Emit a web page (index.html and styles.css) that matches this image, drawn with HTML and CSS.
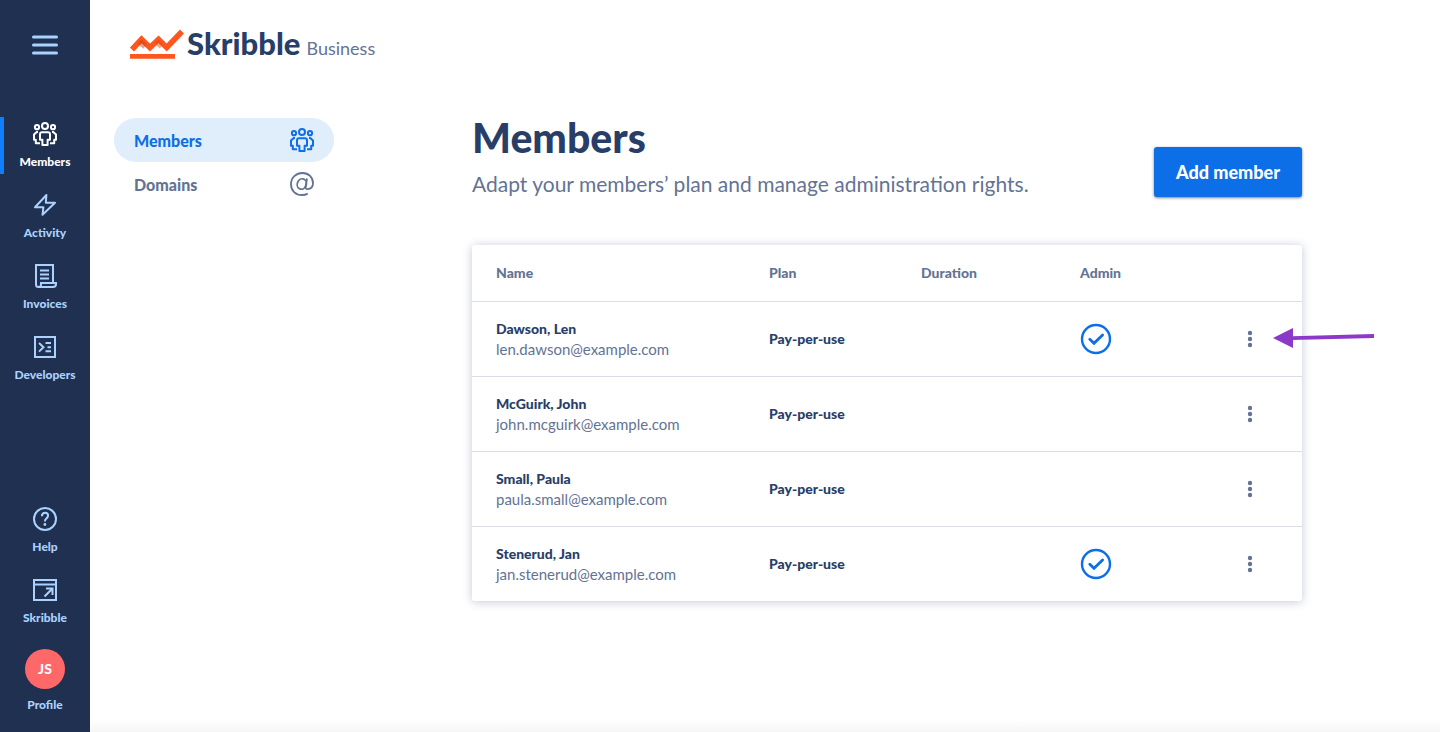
FILE: index.html
```html
<!DOCTYPE html>
<html lang="en">
<head>
<meta charset="utf-8">
<title>Skribble Business – Members</title>
<link rel="stylesheet" href="styles.css">
</head>
<body>
<svg class="sprite" aria-hidden="true">
  <symbol id="i-members" viewBox="0 0 24 24">
    <g fill="none" stroke="currentColor" stroke-width="2" stroke-linejoin="round">
      <circle cx="12" cy="4" r="3"/><circle cx="4" cy="5.2" r="2.100"/><circle cx="20" cy="5.200" r="2.100"/>
      <path d="M9 10.200h6q2 0 2 2v5.600h-2.400v5.200H9.400v-5.200H7v-5.600q0-2 2-2z"/>
      <path d="M5 10H3.800L1 12.600v5.200h1.800v3.400H7M19 10h1.200l2.800 2.600v5.200h-1.800v3.400H17"/>
    </g>
  </symbol>
  <symbol id="i-check" viewBox="0 0 32 32">
    <circle cx="16" cy="16" r="14" fill="none" stroke="currentColor" stroke-width="2.400"/>
    <path d="M9.800 16.200l4.200 4 8.600-8.200" fill="none" stroke="currentColor" stroke-width="2.800" stroke-linecap="round"/>
  </symbol>
  <symbol id="i-dots" viewBox="0 0 16 24">
    <circle cx="8" cy="6" r="2.200" fill="currentColor"/><circle cx="8" cy="12" r="2.200" fill="currentColor"/><circle cx="8" cy="18" r="2.200" fill="currentColor"/>
  </symbol>
</svg>
<div class="app">
  <nav class="sidebar" aria-label="Main">
    <button class="burger" type="button" aria-label="Menu"><svg viewBox="0 0 26 20" width="26" height="20"><path d="M1.500 2h23M1.500 10h23M1.500 18h23" stroke="currentColor" stroke-width="3" stroke-linecap="round"/></svg></button>
    <div class="side-group">
      <a class="side-item active" href="#members"><svg class="icon"><use href="#i-members"/></svg>Members</a>
      <a class="side-item" href="#activity"><svg class="icon" viewBox="0 0 24 24"><path d="M13.400 2L2 14.200h8.400l-.9 7.600L22 9.800h-9.200z" fill="none" stroke="currentColor" stroke-width="2" stroke-linejoin="round"/></svg>Activity</a>
      <a class="side-item" href="#invoices"><svg class="icon" viewBox="0 0 24 24"><path d="M20 18.500V1H3v19.500Q3 23 5.500 23H20q3 0 3-3v-1H8v1.500Q8 23 5.500 23M7 6.500h9M7 10.500h9M7 14.500h9" fill="none" stroke="currentColor" stroke-width="2"/></svg>Invoices</a>
      <a class="side-item" href="#developers"><svg class="icon" viewBox="0 0 24 24"><path d="M2 2h20v20H2z" fill="none" stroke="currentColor" stroke-width="2"/><path d="M6 8l4.500 4.300L6 16.600M12.500 8H18M14.500 12.300H18M12.500 16.300H18" fill="none" stroke="currentColor" stroke-width="2"/></svg>Developers</a>
    </div>
    <div class="side-group side-bottom">
      <a class="side-item" href="#help"><svg class="icon" viewBox="0 0 24 24"><circle cx="12" cy="12" r="11" fill="none" stroke="currentColor" stroke-width="2"/><path d="M8.900 9.300q0-3.600 3.200-3.600 3 0 3 2.900 0 1.500-1.600 2.800-1.600 1.200-1.600 3.200" fill="none" stroke="currentColor" stroke-width="2"/><circle cx="11.900" cy="17.500" r="1.400" fill="currentColor"/></svg>Help</a>
      <a class="side-item" href="#skribble"><svg class="icon" viewBox="0 0 24 24"><path d="M1 2h22v20H1zM1 6.500h22M11.500 18.500l7.500-7.500M13 10.500h6.500V17" fill="none" stroke="currentColor" stroke-width="2"/></svg>Skribble</a>
      <a class="side-item" href="#profile"><span class="avatar">JS</span>Profile</a>
    </div>
  </nav>
  <div class="page">
    <header class="brand">
      <svg class="brand-mark" viewBox="0 0 54 30" width="54" height="30" aria-hidden="true">
        <defs><linearGradient id="fold" x1="0" x2="1" y1="0" y2="1"><stop offset="0" stop-color="#b8380f"/><stop offset="1" stop-color="#ff561e"/></linearGradient></defs>
        <path d="M2 20.500L11.500 10.300l8.500 8.200 8.500-8.200 8.200 8.200L52 2.500" fill="none" stroke="#ff561e" stroke-width="5.600"/>
        <path d="M9.500 12.500l2-2.200 5.500 5.300-3.900 4.100-5.300-5.200zM26.300 12.400l2.200-2.100 5.100 5.100-4 4-5.100-5.200z" fill="url(#fold)" opacity=".5"/>
        <path d="M0 27.400h45" stroke="#ff561e" stroke-width="4.600"/>
      </svg>
      <span class="brand-name">Skribble</span>
      <span class="brand-plan">Business</span>
    </header>
    <div class="columns">
      <nav class="submenu" aria-label="Business">
        <a class="submenu-item current" href="#members">Members<svg class="icon"><use href="#i-members"/></svg></a>
        <a class="submenu-item" href="#domains">Domains<svg class="icon" viewBox="0 0 24 24"><g fill="none" stroke="currentColor" stroke-width="1.800"><ellipse cx="11.800" cy="12" rx="4.500" ry="5.300" transform="rotate(22 11.800 12)"/><path d="M17 6.500l-1.300 7.800q-.5 2.900 1.900 2.900 5.400-.6 5.400-6C23 5.300 18.600 1 12.500 1 6 1 1 5.700 1 12.200 1 18.700 5.500 23 12 23q3.200 0 5.700-1.400"/></g></svg></a>
      </nav>
      <main class="content">
        <div class="heading">
          <div>
            <h1>Members</h1>
            <p class="intro">Adapt your members’ plan and manage administration rights.</p>
          </div>
          <button class="primary" type="button">Add member</button>
        </div>
        <div class="card">
          <table>
            <colgroup><col><col class="c-plan"><col class="c-duration"><col class="c-admin"><col class="c-action"></colgroup>
            <thead><tr><th>Name</th><th>Plan</th><th>Duration</th><th>Admin</th><th></th></tr></thead>
            <tbody>
              <tr><td><b>Dawson, Len</b><span class="email">len.dawson@example.com</span></td><td><b>Pay-per-use</b></td><td></td><td><svg class="check" role="img" aria-label="Admin"><use href="#i-check"/></svg></td>
                <td class="action"><button class="more" type="button" aria-label="Options"><svg width="16" height="24"><use href="#i-dots"/></svg></button>
                  <svg class="pointer" viewBox="0 0 102 20" width="102" height="20" aria-hidden="true"><path d="M0 10L20 0v20z" fill="#8c39c9"/><path d="M19 8.200L101 6v4L19 12z" fill="#8c39c9"/></svg></td></tr>
              <tr><td><b>McGuirk, John</b><span class="email">john.mcguirk@example.com</span></td><td><b>Pay-per-use</b></td><td></td><td></td><td class="action"><button class="more" type="button" aria-label="Options"><svg width="16" height="24"><use href="#i-dots"/></svg></button></td></tr>
              <tr><td><b>Small, Paula</b><span class="email">paula.small@example.com</span></td><td><b>Pay-per-use</b></td><td></td><td></td><td class="action"><button class="more" type="button" aria-label="Options"><svg width="16" height="24"><use href="#i-dots"/></svg></button></td></tr>
              <tr><td><b>Stenerud, Jan</b><span class="email">jan.stenerud@example.com</span></td><td><b>Pay-per-use</b></td><td></td><td><svg class="check" role="img" aria-label="Admin"><use href="#i-check"/></svg></td><td class="action"><button class="more" type="button" aria-label="Options"><svg width="16" height="24"><use href="#i-dots"/></svg></button></td></tr>
            </tbody>
          </table>
        </div>
      </main>
    </div>
  </div>
</div>
</body>
</html>
```
FILE: styles.css
```css
* { box-sizing: border-box; }
body { margin: 0; font-family: Lato, "Open Sans", sans-serif; color: #283e69; background: #fff; }
button { font: inherit; border: 0; padding: 0; background: none; color: inherit; cursor: pointer; }
a { color: inherit; text-decoration: none; }
svg { display: block; }
.sprite { position: absolute; width: 0; height: 0; }
.icon { width: 24px; height: 24px; flex: none; }

.app { display: flex; min-height: 100vh; }
.sidebar { width: 90px; flex: none; display: flex; flex-direction: column; background: #203050; color: #abd2ff; padding: 35px 0 19px; }
.burger { align-self: center; margin-bottom: 62px; }
.side-group { display: flex; flex-direction: column; gap: 14px; }
.side-item { display: flex; flex-direction: column; align-items: center; gap: 8px; min-height: 57px; padding-top: 5px; font-size: 12px; line-height: 16px; font-weight: 900; }
.side-item.active { color: #fff; background: linear-gradient(#0f7fff, #0f7fff) left / 4px 100% no-repeat; }
.side-bottom { margin-top: auto; }
.avatar { width: 40px; height: 40px; border-radius: 50%; background: #ff6868; color: #fff; font-size: 14px; line-height: 40px; text-align: center; }

.page { flex: 1; min-width: 0; background: linear-gradient(#fff, #f6f6f6) bottom / 100% 12px no-repeat; }
.brand { display: flex; align-items: baseline; padding: 22px 40px 0; height: 118px; }
.brand-mark { margin-right: 3px; align-self: flex-start; margin-top: 7px; }
.brand-name { font-size: 31px; line-height: 42px; font-weight: 900; }
.brand-plan { margin-left: 6px; font-size: 18px; color: #647394; }
.columns { display: flex; }
.submenu { width: 220px; flex: none; margin-left: 24px; }
.submenu-item { display: flex; align-items: center; justify-content: space-between; height: 44px; padding: 0 20px; border-radius: 22px; font-size: 16px; font-weight: 900; color: #647394; }
.submenu-item.current { background: #e0eefc; color: #0c6fe8; }
.content { flex: 1; min-width: 0; max-width: 830px; margin: 0 auto; }
.heading { display: flex; justify-content: space-between; align-items: flex-end; margin-bottom: 48px; }
h1 { margin: 0; font-size: 41px; line-height: 40px; font-weight: 900; }
.intro { margin: 12px 0 0; font-size: 21px; line-height: 27px; color: #647394; }
.primary { width: 148px; height: 50px; flex: none; border-radius: 3px; background: #0c6fe8; color: #fff; font-size: 18px; font-weight: 900; box-shadow: 0 1px 3px rgba(0, 0, 0, .5); }

.card { border-radius: 3px; background: #fff; box-shadow: 0 1px 10px rgba(38, 59, 102, .28); }
table { width: 100%; table-layout: fixed; border-collapse: collapse; font-size: 14px; line-height: 20px; }
.c-plan { width: 152px; }
.c-duration { width: 159px; }
.c-admin { width: 140px; }
.c-action { width: 106px; }
th { height: 56px; padding: 0 0 0 24px; text-align: left; font-weight: 900; color: #647394; border-bottom: 1px solid #dadee6; }
td { height: 75px; padding: 0 0 0 24px; border-bottom: 1px solid #dadee6; }
tr:last-child td { border-bottom: 0; }
b { font-weight: 900; }
.email { display: block; font-size: 15px; color: #647394; }
.check { width: 32px; height: 32px; color: #0c6fe8; }
.action { position: relative; padding-left: 46px; color: #647394; }
.more { display: block; }
.pointer { position: absolute; left: 77px; top: 26px; }
```
